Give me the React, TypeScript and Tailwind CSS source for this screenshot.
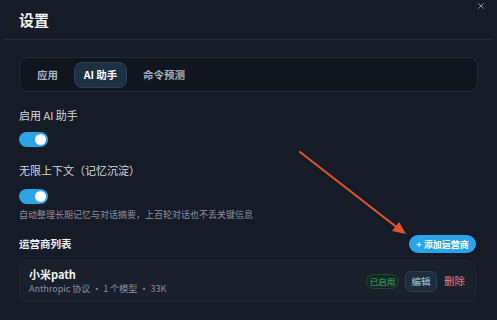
import React from "react";
import { X } from "lucide-react";

const font = { fontFamily: '"Noto Sans CJK SC", "Noto Sans", sans-serif' };

function Toggle() {
  return (
    <div className="w-[29px] h-[15px] rounded-full bg-[#2ba3e6] flex items-center justify-end pr-[2px]">
      <div className="w-[11px] h-[11px] rounded-full bg-white" />
    </div>
  );
}

export default function App() {
  return (
    <div className="w-[497px] h-[320px] bg-[#161b28] text-[#e4e7ee] relative overflow-hidden" style={font}>
      {/* header */}
      <div className="h-[40px] mx-[4px] border-b border-[#262c3a] flex items-center px-[15px] relative">
        <h1 className="text-[15px] font-bold text-[#f1f3f7] leading-none">设置</h1>
        <X className="absolute right-[7px] top-[1px] w-[10px] h-[10px] text-[#a3a9b6]" strokeWidth={2} />
      </div>

      <div className="px-[19px]">
        {/* tabs */}
        <div className="mt-[17px] h-[35px] rounded-[9px] bg-[#11151f] border border-[#242a38] flex items-center px-[5px] gap-[4px] text-[10.5px] font-bold">
          <button className="h-[26px] pl-[12px] pr-[12px] text-[#a9afbb]">应用</button>
          <button className="h-[26px] w-[53px] rounded-[8px] bg-[#1d3142] border border-[#2a4253] text-white">AI 助手</button>
          <button className="h-[26px] px-[12px] text-[#a9afbb]">命令预测</button>
        </div>

        {/* settings */}
        <div className="mt-[16px] text-[11px] text-[#d3d7df] leading-[14px]">启用 AI 助手</div>
        <div className="mt-[10px]"><Toggle /></div>

        <div className="mt-[16px] text-[11px] text-[#d3d7df] leading-[14px]">无限上下文（记忆沉淀）</div>
        <div className="mt-[12px]"><Toggle /></div>
        <div className="mt-[5px] text-[9px] text-[#8c92a0] leading-[12px]">自动整理长期记忆与对话摘要，上百轮对话也不丢关键信息</div>

        {/* provider list */}
        <div className="mt-[14px] flex items-center justify-between">
          <span className="text-[10.5px] font-bold text-[#eef0f4]">运营商列表</span>
          <button className="h-[18px] w-[67px] mr-[2px] rounded-full bg-[#2aa4e8] text-white text-[9px] font-bold leading-none">+ 添加运营商</button>
        </div>

        <div className="mt-[7px] h-[42px] mr-[2px] rounded-[8px] bg-[#1a1f2c] border border-[#1f2534] flex items-center justify-between pl-[9px] pr-[10px]">
          <div className="flex flex-col gap-[2px]">
            <span className="text-[11px] font-bold text-[#f1f3f7] leading-[14px]">小米path</span>
            <span className="text-[9px] text-[#8a909e] leading-[12px]">Anthropic 协议 · 1 个模型 · 33K</span>
          </div>
          <div className="flex items-center">
            <span className="h-[15px] w-[33px] rounded-full bg-[#132a24] border border-[#1f4a36] text-[#3fae6e] text-[8.5px] leading-[13px] text-center">已启用</span>
            <button className="ml-[6px] h-[21px] w-[32px] rounded-[6px] bg-[#1c2d3c] border border-[#2b4152] text-[#9dd0ec] text-[9.5px]">编辑</button>
            <button className="ml-[7px] text-[10.5px] text-[#e47c86]">删除</button>
          </div>
        </div>
      </div>

      {/* annotation arrow */}
      <svg className="absolute left-0 top-0 pointer-events-none" width="497" height="320">
        <line x1="300" y1="152" x2="399" y2="229" stroke="#e0532f" strokeWidth="2.2" strokeLinecap="round" />
        <polygon points="406,234 392,231 399,222" fill="#e0532f" />
      </svg>
    </div>
  );
}
